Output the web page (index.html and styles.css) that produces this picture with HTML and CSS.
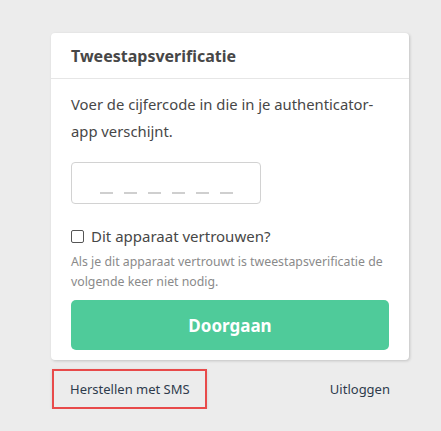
FILE: index.html
```html
<!DOCTYPE html>
<html lang="nl">
<head>
<meta charset="utf-8">
<link rel="stylesheet" href="styles.css">
</head>
<body>
<div class="page">
  <div class="card">
    <div class="card-header">Tweestapsverificatie</div>
    <div class="card-body">
      <p class="intro">Voer de cijfercode in die in je authenticator-app verschijnt.</p>
      <div class="code-input">
        <span class="dash"></span><span class="dash"></span><span class="dash"></span><span class="dash"></span><span class="dash"></span><span class="dash"></span>
      </div>
      <label class="trust">
        <span class="box"></span>
        <span>Dit apparaat vertrouwen?</span>
      </label>
      <p class="hint">Als je dit apparaat vertrouwt is tweestapsverificatie de volgende keer niet nodig.</p>
      <button class="primary">Doorgaan</button>
    </div>
  </div>
  <div class="footer">
    <a class="sms">Herstellen met SMS</a>
    <a class="logout">Uitloggen</a>
  </div>
</div>
</body>
</html>
```
FILE: styles.css
```css
html, body {
  margin: 0;
  padding: 0;
  background: #ececec;
  font-family: "Noto Sans", "Open Sans", sans-serif;
}
.page {
  width: 358px;
  padding: 33px 0 0 51px;
}
.card {
  background: #fff;
  border-radius: 4px;
  box-shadow: 1px 1px 3px rgba(0,0,0,0.18);
}
.card-header {
  height: 46px;
  box-sizing: border-box;
  padding: 12px 20px 0;
  border-bottom: 1px solid #e6e6e6;
  font-size: 16px;
  font-weight: 700;
  color: #474747;
}
.card-body {
  padding: 12px 20px 10px;
}
.intro {
  margin: 0;
  font-size: 14.8px;
  line-height: 27px;
  color: #474747;
}
.code-input {
  margin-top: 17px;
  width: 190px;
  height: 42px;
  box-sizing: border-box;
  border: 1px solid #d2d2d2;
  border-radius: 4px;
  display: flex;
  align-items: flex-end;
  gap: 11px;
  padding: 0 0 9px 28px;
}
.dash {
  width: 13px;
  height: 2px;
  background: #cfcfcf;
}
.trust {
  display: flex;
  align-items: center;
  gap: 7px;
  margin-top: 22px;
  font-size: 15px;
  color: #474747;
}
.box {
  width: 11px;
  height: 11px;
  border: 1px solid #555;
  border-radius: 2px;
}
.hint {
  margin: 6px 0 0;
  font-size: 12.3px;
  line-height: 20px;
  color: #8a8a8a;
}
.primary {
  display: block;
  margin-top: 8px;
  width: 100%;
  height: 50px;
  border: 0;
  border-radius: 5px;
  background: #4fcb9a;
  color: #fff;
  font-family: inherit;
  font-size: 17px;
  font-weight: 700;
}
.footer {
  display: flex;
  justify-content: space-between;
  align-items: center;
  margin-top: 9px;
  padding-right: 19px;
  font-size: 13px;
  color: #2e3b4c;
}
.sms {
  margin-left: 1px;
  width: 155px;
  height: 40px;
  box-sizing: border-box;
  border: 2px solid #e84a4a;
  display: flex;
  align-items: center;
  padding-left: 16px;
  box-shadow: 0 1px 3px rgba(0,0,0,0.12);
}
```
